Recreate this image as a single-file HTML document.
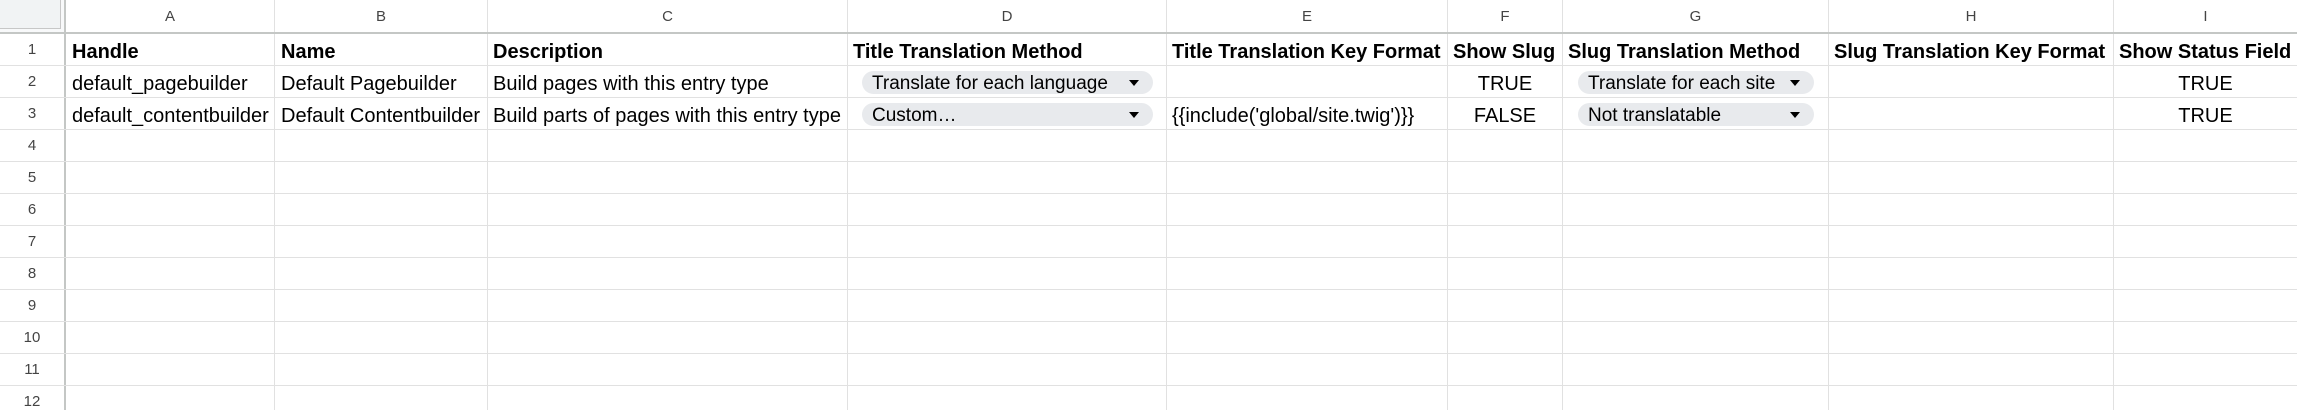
<!DOCTYPE html>
<html><head><meta charset="utf-8"><style>
body{margin:0;width:2297px;height:410px;overflow:hidden;background:#fff;font-family:"Liberation Sans",Arial,sans-serif;position:relative}
.v{position:absolute;top:0;height:410px;width:1px;background:#e1e1e1}
.h{position:absolute;left:0;width:2297px;height:1px;background:#e1e1e1}
.t{position:absolute;font-size:20px;color:#000;white-space:nowrap;line-height:32px;margin-top:2px}
.b{font-weight:bold}
.ch{position:absolute;top:0;height:32px;line-height:34px;font-size:15px;color:#444;text-align:center}
.rn{position:absolute;left:0;width:64px;text-align:center;font-size:15px;color:#444;line-height:32px}
.chip{position:absolute;height:23px;background:#e8eaed;border-radius:12px;font-size:19px;line-height:25px;padding-left:10px;box-sizing:border-box;white-space:nowrap}
.chip:after{content:"";position:absolute;right:14px;top:9px;border-left:5px solid transparent;border-right:5px solid transparent;border-top:6px solid #000}
</style></head><body>
<div style="position:absolute;left:0;top:0;width:64px;height:32px;background:#f8f9fa"></div>
<div style="position:absolute;left:0;top:0;width:60px;height:28px;background:#f1f3f4;border-right:1px solid #c7c7c7;border-bottom:1px solid #c7c7c7"></div>
<div class="v" style="left:64px;width:2px;background:#c4c7c5"></div>
<div class="v" style="left:274px"></div><div class="v" style="left:487px"></div><div class="v" style="left:847px"></div><div class="v" style="left:1166px"></div><div class="v" style="left:1447px"></div><div class="v" style="left:1562px"></div><div class="v" style="left:1828px"></div><div class="v" style="left:2113px"></div>
<div class="h" style="top:32px;height:2px;background:#c4c7c5"></div>
<div class="h" style="top:65px"></div><div class="h" style="top:97px"></div><div class="h" style="top:129px"></div><div class="h" style="top:161px"></div><div class="h" style="top:193px"></div><div class="h" style="top:225px"></div><div class="h" style="top:257px"></div><div class="h" style="top:289px"></div><div class="h" style="top:321px"></div><div class="h" style="top:353px"></div><div class="h" style="top:385px"></div>
<div class="ch" style="left:66px;width:208px">A</div><div class="ch" style="left:275px;width:212px">B</div><div class="ch" style="left:488px;width:359px">C</div><div class="ch" style="left:848px;width:318px">D</div><div class="ch" style="left:1167px;width:280px">E</div><div class="ch" style="left:1448px;width:114px">F</div><div class="ch" style="left:1563px;width:265px">G</div><div class="ch" style="left:1829px;width:284px">H</div><div class="ch" style="left:2114px;width:183px">I</div>
<div class="rn" style="top:34px">1</div><div class="rn" style="top:66px">2</div><div class="rn" style="top:98px">3</div><div class="rn" style="top:130px">4</div><div class="rn" style="top:162px">5</div><div class="rn" style="top:194px">6</div><div class="rn" style="top:226px">7</div><div class="rn" style="top:258px">8</div><div class="rn" style="top:290px">9</div><div class="rn" style="top:322px">10</div><div class="rn" style="top:354px">11</div><div class="rn" style="top:386px">12</div>
<div class="t b" style="left:72px;top:34px">Handle</div>
<div class="t b" style="left:281px;top:34px">Name</div>
<div class="t b" style="left:493px;top:34px">Description</div>
<div class="t b" style="left:853px;top:34px">Title Translation Method</div>
<div class="t b" style="left:1172px;top:34px">Title Translation Key Format</div>
<div class="t b" style="left:1453px;top:34px">Show Slug</div>
<div class="t b" style="left:1568px;top:34px">Slug Translation Method</div>
<div class="t b" style="left:1834px;top:34px">Slug Translation Key Format</div>
<div class="t b" style="left:2119px;top:34px">Show Status Field</div>
<div class="t" style="left:72px;top:66px">default_pagebuilder</div>
<div class="t" style="left:281px;top:66px">Default Pagebuilder</div>
<div class="t" style="left:493px;top:66px">Build pages with this entry type</div>
<div class="chip" style="left:862px;top:71px;width:291px">Translate for each language</div>
<div class="t" style="left:1448px;top:66px;width:114px;text-align:center">TRUE</div>
<div class="chip" style="left:1578px;top:71px;width:236px">Translate for each site</div>
<div class="t" style="left:2114px;top:66px;width:183px;text-align:center">TRUE</div>
<div class="t" style="left:72px;top:98px">default_contentbuilder</div>
<div class="t" style="left:281px;top:98px">Default Contentbuilder</div>
<div class="t" style="left:493px;top:98px">Build parts of pages with this entry type</div>
<div class="chip" style="left:862px;top:103px;width:291px">Custom…</div>
<div class="t" style="left:1172px;top:98px">{{include('global/site.twig')}}</div>
<div class="t" style="left:1448px;top:98px;width:114px;text-align:center">FALSE</div>
<div class="chip" style="left:1578px;top:103px;width:236px">Not translatable</div>
<div class="t" style="left:2114px;top:98px;width:183px;text-align:center">TRUE</div>
</body></html>
